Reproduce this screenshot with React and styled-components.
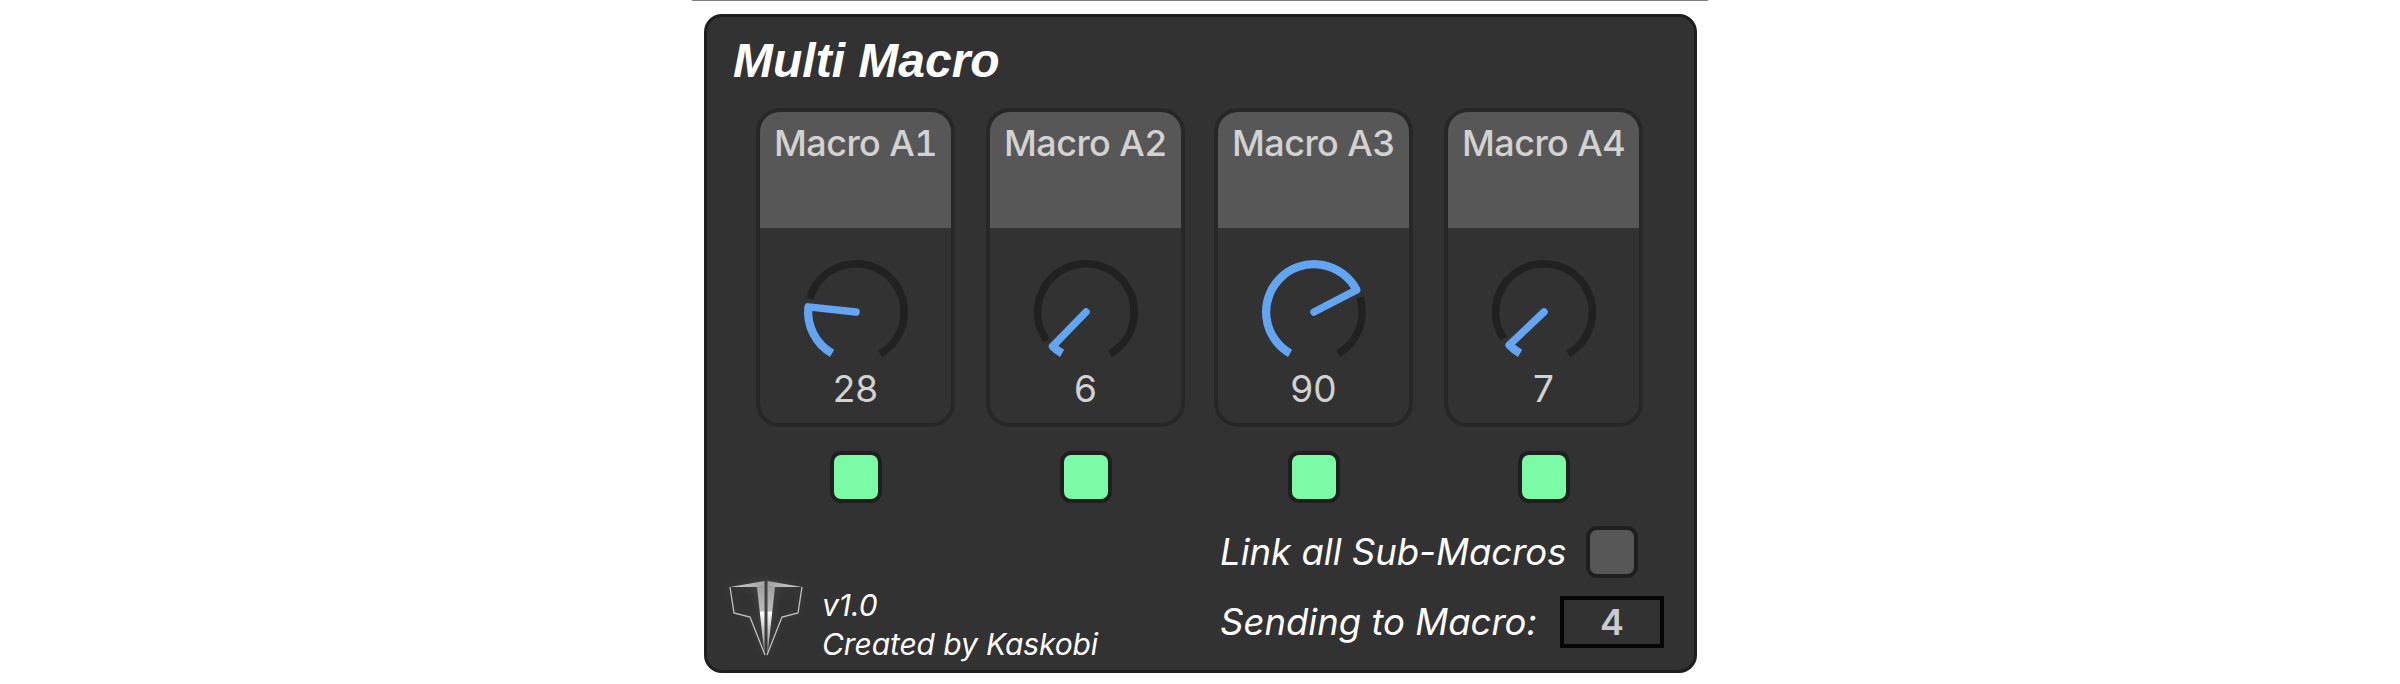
import styled, { createGlobalStyle } from "styled-components";

const macros = [
  { name: "Macro A1", value: 28 },
  { name: "Macro A2", value: 6 },
  { name: "Macro A3", value: 90 },
  { name: "Macro A4", value: 7 },
];

const GlobalStyle = createGlobalStyle`
  html, body {
    margin: 0;
    padding: 0;
    background-color: #ffffff;
  }
  body {
    font-family: "Inter", "Liberation Sans", sans-serif;
  }
`;

const Page = styled.div`
  width: 2400px;
  height: 684px;
  display: flex;
  flex-direction: column;
  align-items: center;
  overflow: hidden;
`;

const TopRule = styled.div`
  width: 1016px;
  height: 1px;
  background-color: #7d7d7d;
  margin-bottom: 13px;
`;

const Panel = styled.div`
  box-sizing: border-box;
  width: 993px;
  height: 659px;
  margin-left: 1px;
  border: 3px solid #1e1e1e;
  border-radius: 18px;
  background-color: #323232;
  padding: 17px 25px 0;
`;

const Title = styled.h1`
  margin: 0 0 0 1px;
  height: 74px;
  font-family: "Liberation Sans", Arial, sans-serif;
  font-size: 48px;
  font-style: italic;
  font-weight: 700;
  line-height: 54px;
  color: #ffffff;
`;

const Columns = styled.div`
  display: grid;
  grid-template-columns: 230px 228px 230px 199px;
  margin-left: 24px;
`;

const Column = styled.div`
  display: flex;
  flex-direction: column;
  align-items: center;
  gap: 24px;
  width: 199px;
`;

const Card = styled.div`
  box-sizing: border-box;
  width: 199px;
  height: 319px;
  border: 4px solid #272727;
  border-radius: 24px;
  overflow: hidden;
  display: flex;
  flex-direction: column;
`;

const CardHeader = styled.div`
  height: 116px;
  flex: none;
  background-color: #575757;
  color: #d2d2d2;
  font-size: 36px;
  font-weight: 500;
  font-variant-numeric: tabular-nums;
  letter-spacing: -0.6px;
  line-height: 44px;
  padding-top: 9px;
  box-sizing: border-box;
  text-align: center;
  white-space: nowrap;
`;

const CardBody = styled.div`
  flex: 1;
  display: flex;
  flex-direction: column;
  align-items: center;
  padding-top: 28px;
`;

const KnobSvg = styled.svg`
  display: block;
  width: 112px;
  height: 112px;
`;

const Value = styled.div`
  color: #d2d2d2;
  font-size: 37px;
  line-height: 42px;
`;

const Toggle = styled.div`
  box-sizing: border-box;
  width: 52px;
  height: 52px;
  flex: none;
  border: 4px solid #1f1f1f;
  border-radius: 11px;
  background-color: ${(props) => (props.$on ? "#7bfba6" : "#575757")};
`;

const Footer = styled.div`
  display: flex;
  justify-content: space-between;
  align-items: flex-start;
  margin-top: 23px;
`;

const Credits = styled.div`
  display: flex;
  align-items: flex-end;
  align-self: flex-end;
  gap: 19px;
  margin-left: -3px;
`;

const LogoSvg = styled.svg`
  display: block;
  flex: none;
  filter: drop-shadow(0 0 4px rgba(255, 255, 255, 0.12));
`;

const CreditText = styled.div`
  color: #ffffff;
  font-size: 30px;
  font-style: italic;
  letter-spacing: -0.1px;
  line-height: 39px;
  margin-bottom: -8px;
`;

const Controls = styled.div`
  display: flex;
  flex-direction: column;
  gap: 18px;
  width: 444px;
  margin-right: 5px;
  margin-bottom: 8px;
`;

const ControlRow = styled.div`
  display: flex;
  align-items: center;
  justify-content: space-between;
  padding-right: ${(props) => props.$inset || 0}px;
`;

const ControlLabel = styled.span`
  color: #ffffff;
  font-size: 36.5px;
  font-style: italic;
  white-space: nowrap;
`;

const NumberBox = styled.div`
  box-sizing: border-box;
  width: 104px;
  height: 52px;
  border: 4px solid #050505;
  color: #cbcbcb;
  font-size: 36px;
  font-weight: 600;
  line-height: 44px;
  text-align: center;
`;

function polar(r, deg) {
  const a = (deg * Math.PI) / 180;
  return [56 + r * Math.sin(a), 56 - r * Math.cos(a)];
}

function arc(r, from, to) {
  const [x1, y1] = polar(r, from);
  const [x2, y2] = polar(r, to);
  const large = to - from > 180 ? 1 : 0;
  return `M${x1} ${y1}A${r} ${r} 0 ${large} 1 ${x2} ${y2}`;
}

function Knob({ value }) {
  const angle = -150 + (value / 127) * 300;
  const [tipX, tipY] = polar(48, angle);
  return (
    <KnobSvg viewBox="0 0 112 112">
      <path d={arc(48.25, angle + 10, 150)} fill="none" stroke="#212121" strokeWidth="7.5" />
      <path d={arc(47.85, -150, angle)} fill="none" stroke="#62a5f2" strokeWidth="8.3" />
      <line x1="56" y1="56" x2={tipX} y2={tipY} stroke="#62a5f2" strokeWidth="7.5" strokeLinecap="round" />
    </KnobSvg>
  );
}

function Logo() {
  return (
    <LogoSvg width="74" height="76" viewBox="0 0 74 76">
      <defs>
        <linearGradient id="stem" x1="0" y1="0" x2="0" y2="1">
          <stop offset="0" stopColor="#a0a0a0" />
          <stop offset="0.36" stopColor="#bcbcbc" />
          <stop offset="0.38" stopColor="#ffffff" />
          <stop offset="0.62" stopColor="#c8c8c8" />
          <stop offset="1" stopColor="#8a8a8a" />
        </linearGradient>
        <linearGradient id="wing" x1="0" y1="0" x2="1" y2="0">
          <stop offset="0" stopColor="#cfcfcf" />
          <stop offset="1" stopColor="#a3a3a3" />
        </linearGradient>
      </defs>
      <g id="half">
        <path d="M1 7L35.5 1V6.5L29 7Z" fill="url(#wing)" />
        <path d="M28 7L35.5 6V75Z" fill="url(#stem)" />
        <path d="M1 7L5 33L21 37L36 75" fill="none" stroke="#c2c2c2" strokeWidth="1.3" />
      </g>
      <use href="#half" transform="matrix(-1 0 0 1 74 0)" />
    </LogoSvg>
  );
}

export default function App() {
  return (
    <>
      <GlobalStyle />
      <Page>
        <TopRule />
        <Panel>
          <Title>Multi Macro</Title>
          <Columns>
            {macros.map((macro) => (
              <Column key={macro.name}>
                <Card>
                  <CardHeader>{macro.name}</CardHeader>
                  <CardBody>
                    <Knob value={macro.value} />
                    <Value>{macro.value}</Value>
                  </CardBody>
                </Card>
                <Toggle $on />
              </Column>
            ))}
          </Columns>
          <Footer>
            <Credits>
              <Logo />
              <CreditText>
                v1.0
                <br />
                Created by Kaskobi
              </CreditText>
            </Credits>
            <Controls>
              <ControlRow $inset={26}>
                <ControlLabel>Link all Sub-Macros</ControlLabel>
                <Toggle />
              </ControlRow>
              <ControlRow>
                <ControlLabel>Sending to Macro:</ControlLabel>
                <NumberBox>4</NumberBox>
              </ControlRow>
            </Controls>
          </Footer>
        </Panel>
      </Page>
    </>
  );
}
